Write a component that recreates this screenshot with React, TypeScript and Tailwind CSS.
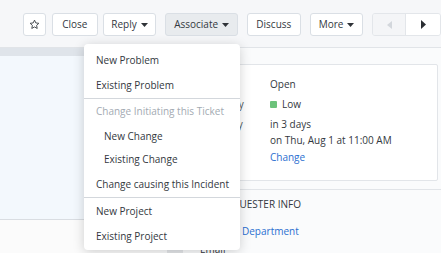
import React from "react";

function Caret() {
  return (
    <svg width="7" height="4" viewBox="0 0 7 4" className="ml-[4px]">
      <path d="M0 0 H7 L3.5 4 Z" fill="#2f3338" />
    </svg>
  );
}

function Btn({ children, className = "" }: { children: React.ReactNode; className?: string }) {
  return (
    <div
      className={`h-[23px] flex items-center justify-center border border-[#dadfe5] rounded-[3px] text-[10px] text-[#33383e] ${className}`}
    >
      {children}
    </div>
  );
}

function Item({ children, indent = false, muted = false, h = "h-[24px]" }: { children: React.ReactNode; indent?: boolean; muted?: boolean; h?: string }) {
  return (
    <div
      className={`${h} shrink-0 flex items-center text-[10px] ${indent ? "pl-[20px]" : "pl-[12px]"} ${muted ? "text-[#a3aab2]" : "text-[#33383e]"}`}
    >
      {children}
    </div>
  );
}

export default function App() {
  return (
    <div className="relative w-[441px] h-[253px] overflow-hidden bg-[#f6f7f9] font-['Open_Sans',sans-serif]">
      {/* toolbar */}
      <div className="h-[48px] border-b border-[#e1e4e8] flex items-start pt-[13px] pl-[23px]">
        <Btn className="w-[23px] bg-white">
          <svg width="11" height="11" viewBox="0 0 24 24" fill="none" stroke="#3a3f45" strokeWidth="2" strokeLinejoin="round">
            <path d="M12 2.5l2.9 6.1 6.6.8-4.9 4.6 1.3 6.6L12 17.3 6.1 20.6l1.3-6.6L2.5 9.4l6.6-.8z" />
          </svg>
        </Btn>
        <Btn className="w-[46px] ml-[6px] bg-white">Close</Btn>
        <Btn className="w-[54px] ml-[5px] bg-white">
          Reply
          <Caret />
        </Btn>
        <Btn className="w-[73px] ml-[9px] bg-[#e8ebee]">
          Associate
          <Caret />
        </Btn>
        <Btn className="w-[54px] ml-[9px] bg-white">Discuss</Btn>
        <Btn className="w-[54px] ml-[9px] bg-white">
          More
          <Caret />
        </Btn>
        <div className="ml-[9px] h-[23px] flex border border-[#e3e6ea] rounded-[3px] overflow-hidden">
          <div className="w-[33px] bg-[#f4f5f7] flex items-center justify-center border-r border-[#e3e6ea]">
            <svg width="5" height="8" viewBox="0 0 5 8">
              <path d="M5 0 V8 L0 4 Z" fill="#d3d7dc" />
            </svg>
          </div>
          <div className="w-[34px] bg-white flex items-center justify-center">
            <svg width="5" height="9" viewBox="0 0 5 9">
              <path d="M0 0 V9 L5 4.5 Z" fill="#2a2e33" />
            </svg>
          </div>
        </div>
      </div>

      {/* body */}
      <div className="flex h-[205px]">
        <div className="w-[160px] flex flex-col">
          <div className="h-[8px] shrink-0 bg-[#dfe4ea]" />
          <div className="h-[164px] shrink-0 bg-[#f3f8fd] border-b border-[#d9dde2]" />
          <div className="flex-1 bg-[#fbfbfb]" />
        </div>
        <div className="flex-1 flex flex-col bg-[#fafbfc] overflow-hidden">
          <div className="shrink-0 mt-[16px] ml-[25px] mr-[3px] h-[117px] bg-white border border-[#e2e5e9] rounded-[2px] flex pt-[11px] text-[10px] text-[#33383e]">
            <div className="w-[62px] pl-[24px] flex flex-col text-[#55595e]">
              <div className="h-[16px] leading-[16px]">Status</div>
              <div className="h-[16px] leading-[16px] mt-[4px]">Priority</div>
              <div className="h-[16px] leading-[16px] mt-[4px]">Due by</div>
            </div>
            <div className="ml-[22px] flex flex-col">
              <div className="h-[16px] leading-[16px]">Open</div>
              <div className="h-[16px] mt-[4px] flex items-center">
                <span className="w-[7px] h-[7px] bg-[#6cc27b] rounded-[1px] mr-[5px]" />
                Low
              </div>
              <div className="h-[16px] leading-[16px] mt-[4px]">in 3 days</div>
              <div className="h-[16px] leading-[16px]">on Thu, Aug 1 at 11:00 AM</div>
              <div className="h-[16px] leading-[16px] mt-[1px] text-[#2b6fd0]">Change</div>
            </div>
          </div>
          <div className="shrink-0 mt-[8px] border-t border-[#e1e4e8] flex flex-col pl-[60px] text-[10px]">
            <div className="shrink-0 h-[16px] leading-[16px] mt-[6px] text-[#33383e]">REQUESTER INFO</div>
            <div className="shrink-0 h-[16px] leading-[16px] mt-[11px] ml-[22px] text-[#2b6fd0]">Department</div>
            <div className="shrink-0 flex items-start mt-[3px] -ml-[53px]">
              <div className="w-[16px] h-[16px] bg-[#e4e6e9]" />
              <div className="ml-[17px] text-[10px] leading-[14px] text-[#33383e]">Email</div>
            </div>
          </div>
        </div>
      </div>

      {/* dropdown menu */}
      <div className="absolute left-[84px] top-[44px] w-[156px] h-[206px] bg-white rounded-[4px] shadow-[0_2px_12px_rgba(0,0,0,0.18)] pt-[4px] flex flex-col">
        <Item>New Problem</Item>
        <Item h="h-[26px]">Existing Problem</Item>
        <div className="h-px shrink-0 bg-[#d3d7dc]" />
        <Item muted h="h-[25px]">Change Initiating this Ticket</Item>
        <Item indent>New Change</Item>
        <Item indent h="h-[23px]">Existing Change</Item>
        <Item h="h-[26px]">Change causing this Incident</Item>
        <div className="h-px shrink-0 bg-[#d3d7dc]" />
        <Item h="h-[26px]">New Project</Item>
        <Item>Existing Project</Item>
      </div>
    </div>
  );
}
